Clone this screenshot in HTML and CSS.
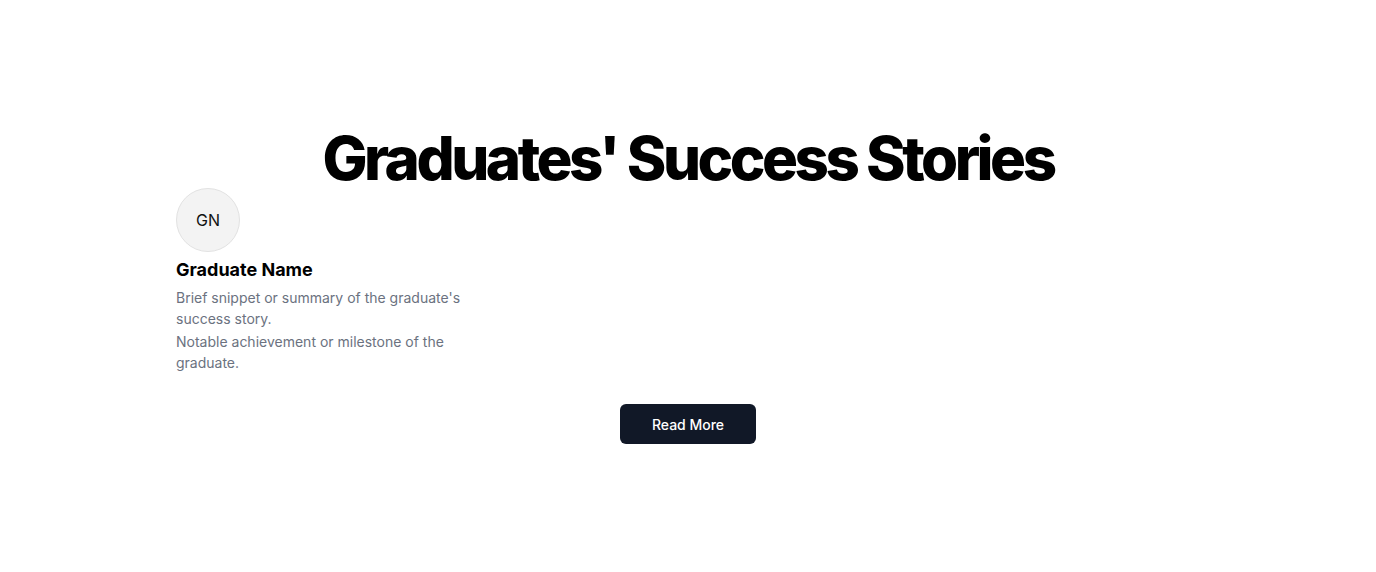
FILE: index.html
```html
<!DOCTYPE html>
<html lang="en">
<head>
<meta charset="utf-8">
<title>Graduates' Success Stories</title>
<link rel="stylesheet" href="styles.css">
</head>
<body>
<main class="page">
  <section class="stories">
    <h1 class="title">Graduates' Success Stories</h1>
    <div class="grid">
      <article class="card">
        <div class="avatar">GN</div>
        <h2 class="name">Graduate Name</h2>
        <p class="text">Brief snippet or summary of the graduate's success story.</p>
        <p class="text">Notable achievement or milestone of the graduate.</p>
      </article>
    </div>
    <div class="actions">
      <button class="btn">Read More</button>
    </div>
  </section>
</main>
</body>
</html>
```
FILE: styles.css
```css
* { box-sizing: border-box; }
html, body { margin: 0; padding: 0; background: #fff; }
body { font-family: Inter, "Noto Sans", sans-serif; color: #000; }
.page {
  min-height: 572px;
  display: flex;
  align-items: center;
  justify-content: center;
}
.stories {
  width: 1024px;
  display: flex;
  flex-direction: column;
}
.title {
  margin: 0;
  font-size: 60px;
  line-height: 60px;
  font-weight: 800;
  letter-spacing: -0.058em;
  text-align: center;
}
.grid {
  display: grid;
  grid-template-columns: repeat(3, 1fr);
  gap: 32px;
  margin-top: 0;
}
.card { display: flex; flex-direction: column; }
.avatar {
  width: 64px;
  height: 64px;
  border-radius: 50%;
  background: #f3f3f3;
  border: 1px solid #e2e2e2;
  display: flex;
  align-items: center;
  justify-content: center;
  font-size: 16px;
  color: #111;
}
.name {
  margin: 4px 0 3px;
  font-size: 18px;
  line-height: 28px;
  font-weight: 700;
}
.text {
  margin: 0 0 2px;
  font-size: 14px;
  line-height: 21px;
  color: #6b7280;
}
.actions {
  display: flex;
  justify-content: center;
  margin-top: 29px;
}
.btn {
  height: 40px;
  padding: 0 32px;
  border: 0;
  border-radius: 6px;
  background: #111827;
  color: #fff;
  font-family: inherit;
  font-size: 14px;
  font-weight: 500;
}
```
